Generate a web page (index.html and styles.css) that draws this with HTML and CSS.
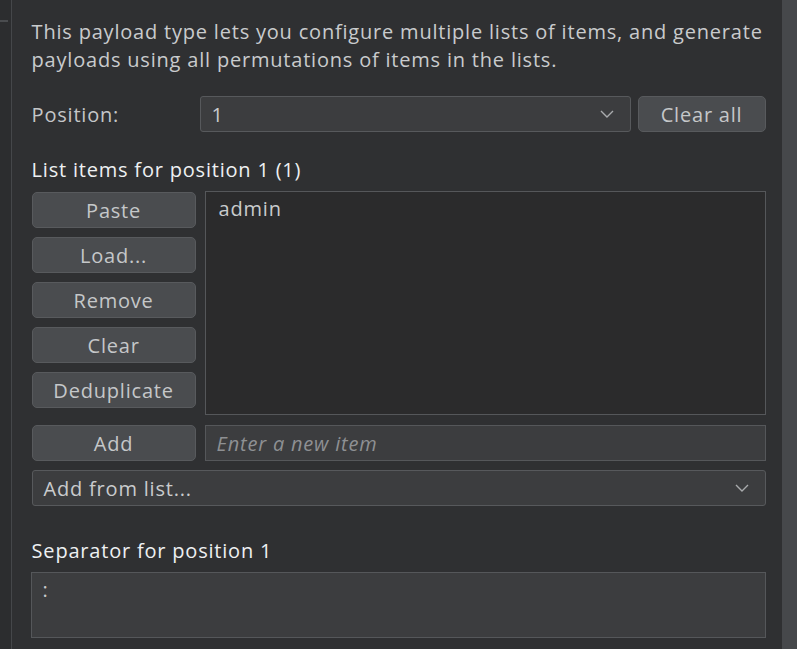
FILE: index.html
```html
<!DOCTYPE html>
<html>
<head>
<meta charset="utf-8">
<link rel="stylesheet" href="styles.css">
</head>
<body>
<div class="app">
  <div class="sidebar"><div class="sidebar-tick"></div></div>
  <div class="divider"></div>
  <main class="panel">
    <p class="desc">This payload type lets you configure multiple lists of items, and generate payloads using all permutations of items in the lists.</p>
    <div class="pos-row">
      <span class="label">Position:</span>
      <div class="combo pos-combo"><span>1</span>
        <svg class="chev" width="14" height="8" viewBox="0 0 14 8"><path d="M1 1 L7 7 L13 1" fill="none" stroke="#a9abad" stroke-width="1.4"/></svg>
      </div>
      <button class="btn clear-all">Clear all</button>
    </div>
    <h3 class="heading">List items for position 1 (1)</h3>
    <div class="list-area">
      <div class="btn-col">
        <button class="btn">Paste</button>
        <button class="btn">Load...</button>
        <button class="btn">Remove</button>
        <button class="btn">Clear</button>
        <button class="btn">Deduplicate</button>
      </div>
      <div class="listbox"><div class="item">admin</div></div>
    </div>
    <div class="add-row">
      <button class="btn">Add</button>
      <div class="input"><span class="placeholder">Enter a new item</span></div>
    </div>
    <div class="combo from-list"><span>Add from list...</span>
      <svg class="chev" width="14" height="8" viewBox="0 0 14 8"><path d="M1 1 L7 7 L13 1" fill="none" stroke="#a9abad" stroke-width="1.4"/></svg>
    </div>
    <h3 class="heading sep-heading">Separator for position 1</h3>
    <div class="sep-box">:</div>
  </main>
  <div class="scrollbar"></div>
</div>
</body>
</html>
```

FILE: styles.css
```css
* { box-sizing: border-box; }
html, body { margin: 0; padding: 0; height: 100%; }
body {
  background: #2f3032;
  font-family: "Open Sans", "Noto Sans", sans-serif;
  color: #c9cbcd;
  font-size: 20px;
  letter-spacing: 0.8px;
  overflow: hidden;
}
.app { display: flex; height: 649px; }
.sidebar { width: 11px; background: #2c2d2f; position: relative; }
.sidebar-tick { position: absolute; left: 0; top: 20px; width: 8px; height: 2px; background: #4a4c4f; }
.divider { width: 1px; background: #45474a; }
.panel { flex: 1; padding: 18px 16px 0 20px; display: flex; flex-direction: column; }
.scrollbar { width: 16px; background: #46484b; }
.desc { margin: 0; line-height: 28px; color: #c9cbcd; }
.pos-row { display: flex; align-items: center; margin-top: 22px; height: 36px; }
.label { width: 168px; color: #c4c6c8; }
.combo {
  background: #3c3d3f; border: 1px solid #57595c; border-radius: 3px;
  display: flex; align-items: center; justify-content: space-between;
  padding: 0 16px 0 11px; color: #c9cbcd;
}
.pos-combo { width: 431px; height: 36px; }
.btn {
  font-family: inherit; font-size: 20px; letter-spacing: 0.8px; color: #c5c7c9;
  background: #4a4c4f; border: 1px solid #585a5d; border-radius: 5px;
  height: 36px; padding: 0; display: flex; align-items: center; justify-content: center;
}
.clear-all { margin-left: 7px; width: 128px; }
.heading { margin: 0; font-weight: normal; font-size: 20px; color: #eef0f2; line-height: 28px; margin-top: 24px; }
.list-area { display: flex; margin-top: 7px; gap: 9px; height: 224px; }
.btn-col { display: flex; flex-direction: column; gap: 9px; width: 164px; padding-top: 1px; }
.btn-col .btn { width: 164px; }
.listbox { flex: 1; background: #2b2b2c; border: 1px solid #55575a; padding: 4px 13px; }
.item { line-height: 26px; color: #c9cbcd; }
.add-row { display: flex; gap: 9px; margin-top: 10px; height: 36px; }
.add-row .btn { width: 164px; }
.input { flex: 1; background: #3c3d3f; border: 1px solid #55575a; display: flex; align-items: center; padding: 0 11px; }
.placeholder { font-style: italic; color: #8e9093; }
.from-list { margin-top: 9px; height: 36px; }
.sep-heading { margin-top: 31px; }
.sep-box { margin-top: 7px; height: 66px; margin-left: -1px; background: #3c3d3f; border: 1px solid #55575a; padding: 4px 11px; line-height: 26px; color: #c9cbcd; }
```
